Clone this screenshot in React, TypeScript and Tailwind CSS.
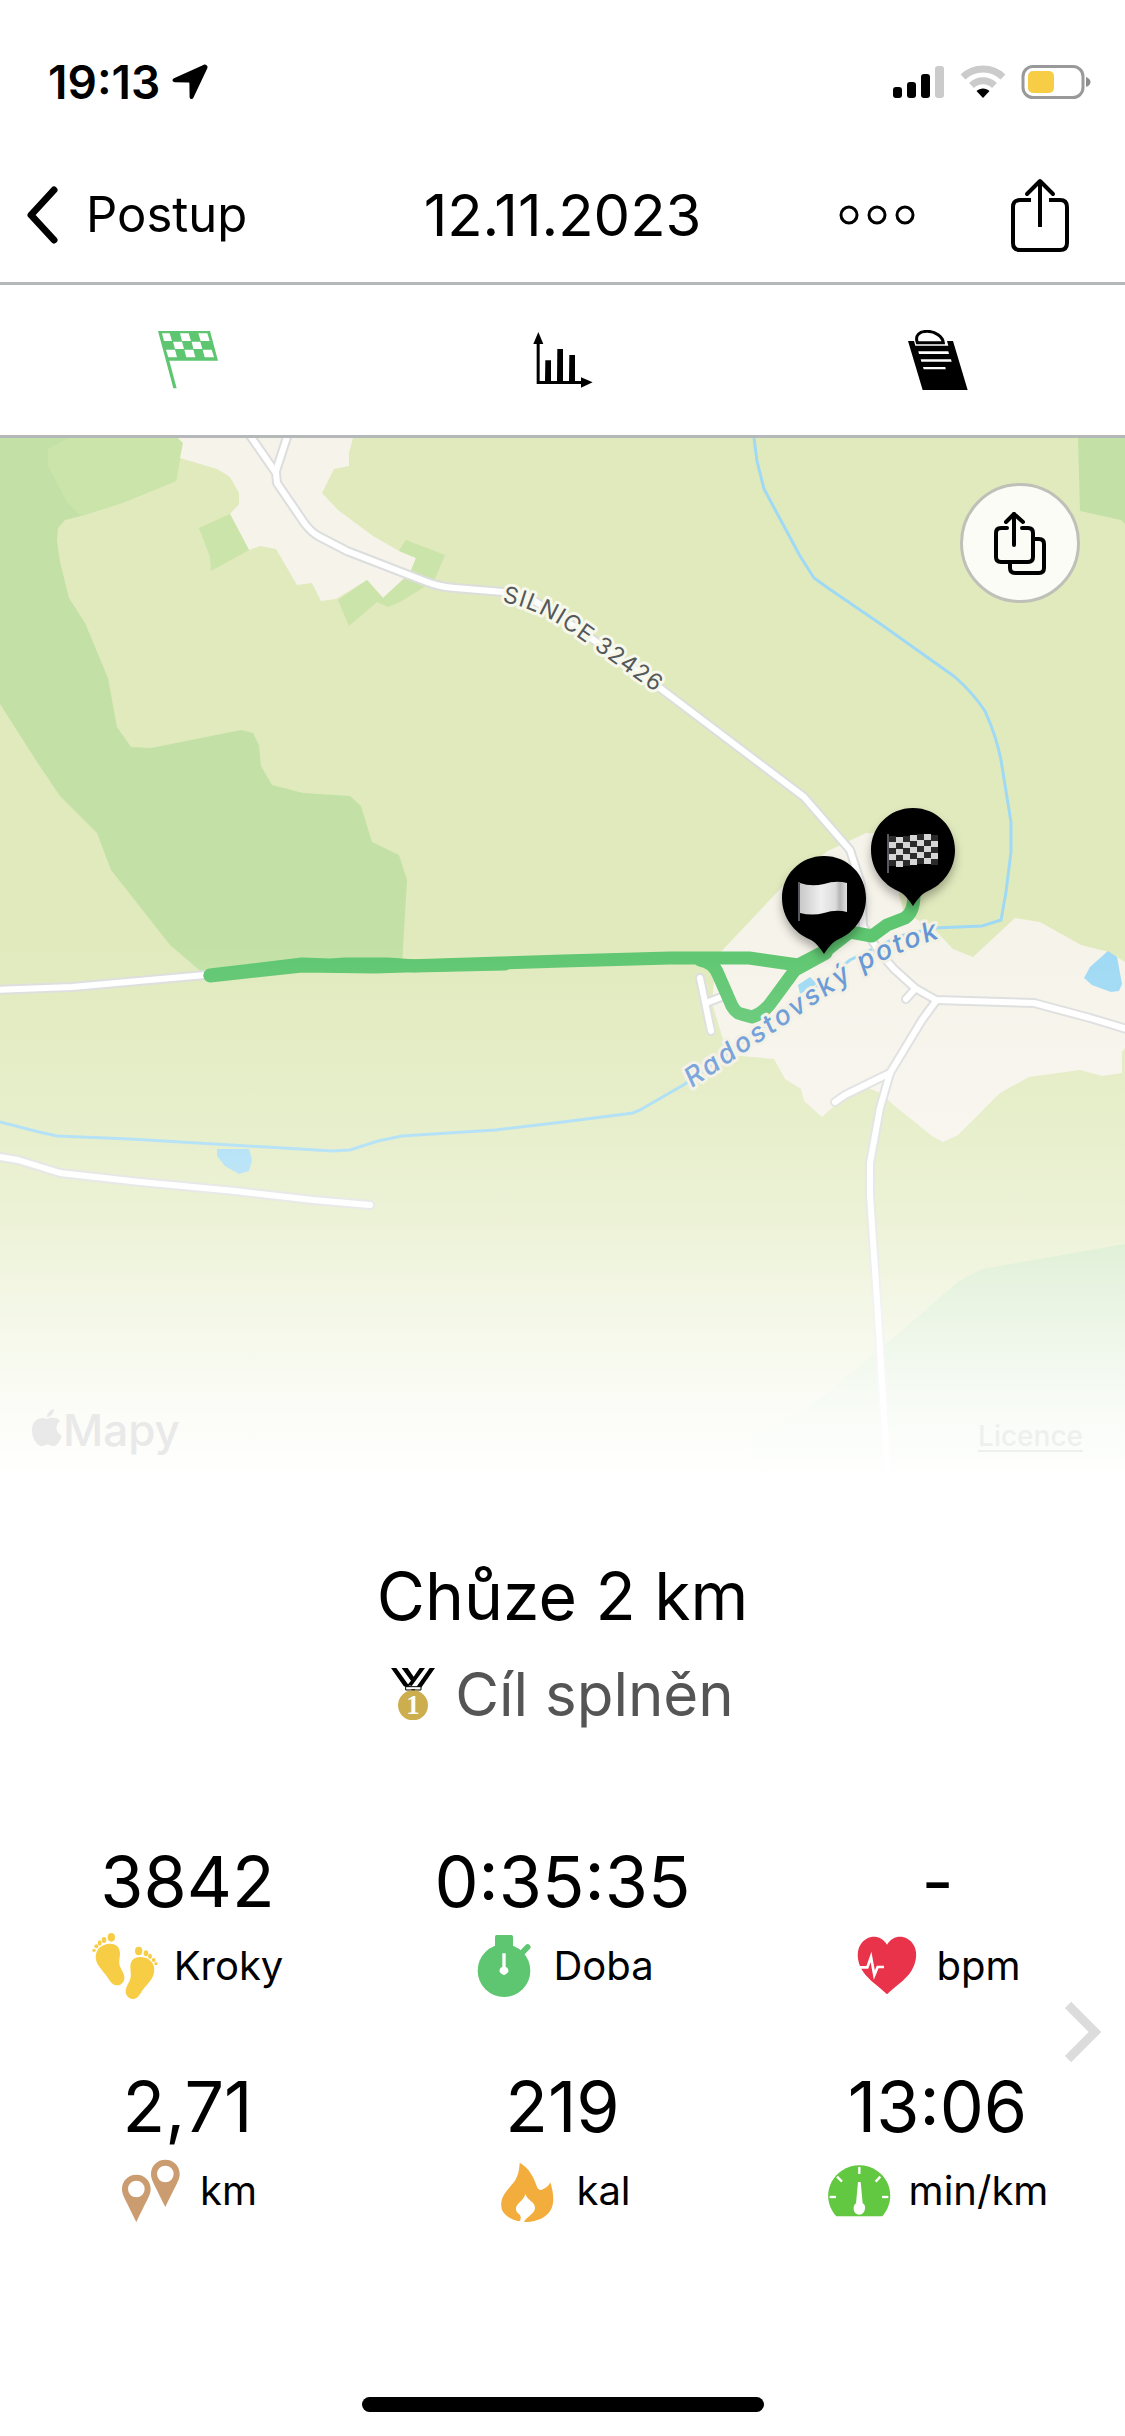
import { useState, type ReactNode } from "react";

type IconProps = { className?: string };

function LocationArrow() {
  return (
    <svg viewBox="0 0 36 36" className="w-9" aria-hidden="true">
      <path
        d="M34.5 1.2 C35.6 2 35.8 3 35.2 4.4 L21.5 33.6 C20.4 36 17.6 35.4 17.6 32.8 L17.4 19.4 C17.4 18.6 17 18.4 16.4 18.4 L3 18.3 C.2 18.2 -.4 15.4 2 14.3 L31.4 1 C32.6 .4 33.6 .5 34.5 1.2 Z"
        fill="#000"
      />
    </svg>
  );
}

function StatusIcons() {
  return (
    <svg viewBox="893 64 200 36" className="w-[200px]" role="img" aria-label="Signal, Wi-Fi, battery">
      <rect x="893" y="87" width="9" height="11" rx="3" />
      <rect x="907" y="82" width="9" height="16" rx="3" />
      <rect x="921" y="74" width="9" height="24" rx="3" />
      <rect x="935" y="66" width="9" height="32" rx="3" fill="#cbcbcb" />
      <path d="M963 77 A29 29 0 0 1 1003 77" fill="none" stroke="#cbcbcb" strokeWidth="7" />
      <path d="M971.500 85.500 A16.500 16.500 0 0 1 994.500 85.500" fill="none" stroke="#cbcbcb" strokeWidth="7" />
      <path d="M983 98 L976.500 91 C980 87.500 986 87.500 989.500 91 Z" />
      <rect x="1023" y="66.500" width="60" height="31" rx="10" fill="none" stroke="#999" strokeWidth="3" />
      <rect x="1028" y="71" width="26" height="22" rx="5" fill="#f7cd46" />
      <path d="M1086 77 C1092 79 1092 85 1086 87 Z" fill="#8c8c8c" />
    </svg>
  );
}

function ShareIcon() {
  return (
    <svg viewBox="0 0 58 74" className="w-[58px]" fill="none" stroke="#000" strokeWidth="4" aria-hidden="true">
      <path d="M20 22 H9 Q2 22 2 29 V65 Q2 72 9 72 H49 Q56 72 56 65 V29 Q56 22 49 22 H38" />
      <path d="M29 49 V4" />
      <path d="M16 16 L29 3 L42 16" strokeLinecap="round" strokeLinejoin="round" />
    </svg>
  );
}

function FlagTabIcon({ className }: IconProps) {
  // viewBox is three units per pixel
  return (
    <svg viewBox="0 0 180 174" className={className} fill="currentColor" aria-hidden="true">
      <path d="M0 0 H156 L180 89 H34 L56 172 H46 Z" />
      <g fill="#fff">
        <path d="M12 7 H35 L42 30 H18 Z" />
        <path d="M66 7 H92 L99 30 H72 Z" />
        <path d="M121 7 H148 L155 30 H128 Z" />
        <path d="M45 32 H72 L78 54 H51 Z" />
        <path d="M101 32 H127 L133 54 H106 Z" />
        <path d="M24 56 H51 L57 79 H31 Z" />
        <path d="M79 56 H106 L112 79 H85 Z" />
        <path d="M134 56 H161 L168 79 H140 Z" />
      </g>
    </svg>
  );
}

function ChartTabIcon({ className }: IconProps) {
  return (
    <svg viewBox="0 0 180 174" className={className} fill="currentColor" aria-hidden="true">
      <path d="M16 3 L31 39 H20 V150 H144 V139 L179 154 L144 170 V159 H11 V39 H1 Z" />
      <path d="M37 88 H54 V152 H36 Z" />
      <path d="M73 54 H90 V152 H72 Z" />
      <path d="M109 72 H126 V152 H108 Z" />
    </svg>
  );
}

function NotesTabIcon({ className }: IconProps) {
  return (
    <svg viewBox="0 0 180 180" className={className} fill="currentColor" aria-hidden="true">
      <path d="M0 33 H18 L22 47 H121 L117 33 H135 L179 180 H44 Z" />
      <path d="M28 38 C20 16 34 4 58 4 C82 4 104 20 106 38 Z" fill="#fff" stroke="currentColor" strokeWidth="9" />
      <path d="M31 64 H121 L123 72 H33 Z" fill="#fff" />
      <path d="M38 88 H129 L131 95 H40 Z" fill="#fff" />
      <path d="M45 111 H112 L113 118 H47 Z" fill="#fff" />
    </svg>
  );
}

function MedalIcon() {
  return (
    <svg viewBox="0 0 132 158" className="w-11" aria-hidden="true">
      <path d="M0 0 H16 L52 50 L62 58 L50 60 L38 54 Z" />
      <path d="M32 0 H50 L68 26 L86 0 H102 L62 54 L50 50 L60 38 Z" />
      <path d="M116 0 H132 L90 60 H74 Z" />
      <path d="M44 56 H90 V66 H44 Z" fill="#fff" stroke="#000" strokeWidth="3" />
      <path d="M61 64 H72 V72 H61 Z" />
      <circle cx="66" cy="112" r="45" fill="#ccae4e" />
      <text x="66" y="139" textAnchor="middle" className="font-['Liberation_Serif',serif] text-[80px] font-bold" fill="#fff">
        1
      </text>
    </svg>
  );
}

function StepsIcon() {
  return (
    <svg viewBox="0 0 198 198" className="w-[66px]" fill="#f8cd46" aria-hidden="true">
      <ellipse cx="58" cy="13" rx="11" ry="13" />
      <ellipse cx="36" cy="21" rx="7" ry="9" />
      <ellipse cx="23" cy="30" rx="6" ry="8" />
      <ellipse cx="13" cy="40" rx="6" ry="6" />
      <circle cx="6" cy="52" r="5" />
      <path d="M52 32 C72 31 83 42 84 60 C84 76 79 86 84 100 C88 112 96 119 97 132 C98 147 88 157 76 157 C64 157 58 150 50 138 C40 122 32 116 20 98 C2 72 12 35 52 32 Z" />
      <ellipse cx="140" cy="54" rx="11" ry="13" />
      <ellipse cx="162" cy="61" rx="7" ry="9" />
      <ellipse cx="174" cy="70" rx="6" ry="8" />
      <ellipse cx="185" cy="81" rx="6" ry="6" />
      <circle cx="192" cy="92" r="5" />
      <path d="M146 72 C126 71 116 82 115 100 C115 116 119 126 114 140 C110 152 102 160 101 172 C100 188 110 198 122 198 C134 198 140 190 147 179 C158 162 166 156 178 139 C198 110 184 73 146 72 Z" />
    </svg>
  );
}

function StopwatchIcon() {
  return (
    <svg viewBox="0 0 198 198" className="w-[66px]" fill="#5ec670" aria-hidden="true">
      <rect x="72" y="6" width="54" height="50" rx="5" />
      <path d="M145 68 L170 42" stroke="#5ec670" strokeWidth="17" strokeLinecap="round" />
      <circle cx="99" cy="113" r="79" />
      <path d="M94 61 H104 V101 C115 107 115 117 105 123 L99 127 L93 123 C83 117 83 107 94 101 Z" fill="#fff" />
    </svg>
  );
}

function HeartIcon() {
  return (
    <svg viewBox="0 0 198 198" className="w-[66px]" aria-hidden="true">
      <path
        d="M99 35 C84 10 58 6 38 17 C6 35 4 78 26 114 C44 142 78 163 99 184 C120 163 154 142 172 114 C194 78 192 35 160 17 C140 6 114 10 99 35 Z"
        fill="#e9334a"
      />
      <path d="M18 103 H40 L51 72 L61 126 L71 102 H90" fill="none" stroke="#fff" strokeWidth="8" />
    </svg>
  );
}

function DistanceIcon() {
  const pin = "M0 -43 C25 -43 43 -24 43 0 C43 18 33 30 0 99 C-33 30 -43 18 -43 0 C-43 -24 -25 -43 0 -43 Z M0 -25 A25 25 0 1 0 0 25 A25 25 0 1 0 0 -25 Z";
  return (
    <svg viewBox="0 0 198 198" className="w-[66px]" fill="#ca9c6f" fillRule="evenodd" aria-hidden="true">
      <path d={pin} transform="translate(55 93)" />
      <path d={pin} transform="translate(142 48)" />
    </svg>
  );
}

function FlameIcon() {
  return (
    <svg viewBox="0 0 198 198" className="w-[66px]" fill="#f2ad3d" aria-hidden="true">
      <path d="M77 14 C106 30 120 60 128 84 C133 98 140 97 147 94 C158 89 166 82 169 73 C176 96 182 124 174 148 C164 178 126 194 90 192 C94 178 123 168 123 149 C123 132 101 128 94 108 C90 128 66 136 66 152 C66 168 82 166 80 180 C80 186 78 190 74 190 C48 184 24 168 22 146 C18 112 44 94 60 72 C72 56 76 36 77 14 Z" />
    </svg>
  );
}

function GaugeIcon() {
  return (
    <svg viewBox="0 0 198 198" className="w-[66px]" fill="#62c741" aria-hidden="true">
      <path d="M28 175 C-14 128 2 66 44 38 C78 16 118 17 150 38 C192 66 206 128 166 175 Z" />
      <g stroke="#fff" strokeWidth="7">
        <path d="M97 27 V48" />
        <path d="M30 56 L45 71" />
        <path d="M160 56 L146 71" />
        <path d="M8 117 H27" />
        <path d="M165 117 H184" />
      </g>
      <path d="M93 72 H101 L107 136 C114 140 115 146 114 153 C112 164 105 170 97 170 C88 170 81 164 80 153 C79 146 82 140 87 136 Z" fill="#fff" />
    </svg>
  );
}

const roads = [
  "M249 434 L276 473 L277 483 L305 524 Q312 533 320 537 L347 551 L427 582 Q440 587 455 588 L503 592 L530 598 L584 633 L660 688 L804 797 L850 850 L861 884 L863 926 L880 953 L894 969 L915 988 L936 1000 L1034 1003 L1090 1018 L1130 1030",
  "M288 434 L276 471",
  "M915 989 L906 999",
  "M936 1001 L922 1020 L890 1073 L880 1108 L870 1163 V1195 L877 1300 L884 1416 L889 1490",
  "M890 1073 L845 1095 L835 1102",
  "M700 978 L711 1031",
  "M706 1003 L724 996",
  "M-6 990 L72 987 L205 975",
  "M-6 1156 L18 1160 L60 1173 L140 1182 L235 1191 L313 1200 L370 1205",
];

function MapPin({ x, y, children }: { x: number; y: number; children: ReactNode }) {
  return (
    <g transform={`translate(${x} ${y})`}>
      <path
        d="M0 -42 C24 -42 42 -23 42 0 C42 20 29 35 15 41 C8 44 4 50 0 56 C-4 50 -8 44 -15 41 C-29 35 -42 20 -42 0 C-42 -23 -24 -42 0 -42 Z"
        fill="#000"
        filter="url(#pin-shadow)"
      />
      {children}
      <path d="M-25 -16 V23" stroke="#55585c" strokeWidth="2" />
    </g>
  );
}

function RouteMap() {
  const cells = [];
  for (let row = 0; row < 5; row++) {
    for (let col = 0; col < 7; col++) {
      // each column is shifted along a shallow wave
      const dy = [1, 2, 1, 0, -1, -1, 0][col];
      cells.push(
        <rect
          key={`${row}-${col}`}
          x={-24 + col * 7}
          y={-15 + row * 6 + dy}
          width="7"
          height="6"
          fill={(row + col) % 2 ? "#d6d6d6" : "#2b2b2b"}
        />
      );
    }
  }

  return (
    <svg viewBox="0 438 1125 1052" className="block w-full" role="img" aria-label="Mapa trasy">
      <defs>
        <linearGradient id="fade" x1="0" y1="940" x2="0" y2="1480" gradientUnits="userSpaceOnUse">
          <stop offset="0" stopColor="#fff" stopOpacity="0" />
          <stop offset="0.340" stopColor="#fff" stopOpacity="0.220" />
          <stop offset="0.510" stopColor="#fff" stopOpacity="0.380" />
          <stop offset="0.670" stopColor="#fff" stopOpacity="0.610" />
          <stop offset="0.850" stopColor="#fff" stopOpacity="0.860" />
          <stop offset="1" stopColor="#fff" />
        </linearGradient>
        <linearGradient id="cloth" x1="0" x2="1">
          <stop offset="0" stopColor="#c9c9c9" />
          <stop offset="0.450" stopColor="#efefef" />
          <stop offset="0.750" stopColor="#dcdcdc" />
          <stop offset="0.850" stopColor="#b5b5b5" />
          <stop offset="1" stopColor="#e0e0e0" />
        </linearGradient>
        <filter id="pin-shadow" x="-30%" y="-30%" width="160%" height="170%">
          <feDropShadow dx="0" dy="6" stdDeviation="5" floodOpacity="0.300" />
        </filter>
        <path id="road-label" d="M502 602 Q535 608 566 629 L662 697" />
        <path id="river-label" d="M692 1088 L760 1042 L850 980 Q880 958 945 936" />
      </defs>

      <rect y="438" width="1125" height="1052" fill="#e1eabd" />

      {/* forests */}
      <path
        d="M0 438 H178 L180 458 L176 481 L122 503 L81 516 L65 520 L58 528 L57 541 L60 562 L69 598 L85 623 L108 678 L117 727 L131 747 L151 748 L241 730 L253 733 L259 745 L261 766 L272 785 L303 793 L350 796 L361 806 L372 842 L399 855 L407 880 L402 965 L205 975 L170 945 L111 870 L97 833 L60 796 L37 762 L0 704 Z"
        fill="#c3e1a6"
      />
      <path d="M68 438 H178 L183 443 L176 481 L122 503 L81 516 L68 504 L48 466 V449 Z" fill="#cae4aa" />
      <path d="M1078 438 H1125 V524 L1121 520 L1080 511 Z" fill="#c3e1a6" />
      <path d="M1125 1244 L1022 1262 L982 1269 L959 1281 L886 1344 L821 1398 L778 1425 L753 1441 L745 1490 H1125 Z" fill="#c8e4b8" />

      {/* built-up areas */}
      <path
        d="M178 438 L183 443 L180 458 L217 469 L230 477 L239 493 V504 L230 514 L249 550 L260 546 L276 549 L297 585 L312 583 L321 601 L336 599 L367 580 L383 598 L410 573 L416 558 L399 551 L373 536 L338 510 L322 493 L334 469 L349 466 V453 L353 438 Z"
        fill="#f6f3ea"
      />
      <path
        d="M783 886 L828 851 L866 833 L890 833 L900 870 L899 895 L904 912 L935 930 L953 949 L973 957 L1015 918 L1040 922 L1081 945 L1109 952 L1125 962 V1048 L1122 1052 V1073 L1102 1076 L1080 1070 L1029 1077 L1000 1093 L958 1135 L943 1142 L932 1136 L896 1107 L880 1093 L868 1088 L835 1105 L822 1117 L804 1101 L801 1089 L785 1079 L774 1059 L730 1055 L722 1036 L712 1003 L716 957 Z"
        fill="#f6f3ea"
      />
      <path d="M199 528 L230 514 L249 550 L211 571 L210 557 Z" fill="#cae4aa" />
      <path d="M406 540 L445 555 L434 581 L400 602 L388 607 L377 602 L349 626 L338 600 L367 580 L383 598 L410 573 L416 558 L399 551 Z" fill="#cae4aa" />

      {/* water */}
      <path
        d="M754 438 L757 461 L764 489 L800 556 L814 578 L828 588 L882 625 L955 677 Q973 693 985 711 Q996 735 1001 760 L1011 822 V852 L1006 892 L1001 920 L982 926 L934 928 L900 936 L850 960 L806 996 L685 1084 L640 1110 L633 1113 L563 1122 L495 1130 L402 1136 L378 1141 L350 1150 L332 1151 L300 1149 L130 1139 L57 1136 L39 1132 L0 1122"
        fill="none"
        stroke="#9fd9f4"
        strokeWidth="3"
      />
      <g fill="#9fd9f4">
        <path d="M217 1149 H249 L252 1160 L249 1171 L239 1174 L225 1166 L217 1156 Z" />
        <path d="M1108 951 L1117 957 L1122 984 L1119 991 L1111 992 L1092 985 L1084 978 L1090 967 Z" />
        <path d="M798 985 L810 977 L817 984 L800 994 Z" />
      </g>

      <g fill="none" strokeLinecap="round" strokeLinejoin="round">
        {roads.map((d) => (
          <path key={d} d={d} stroke="#dcdddd" strokeWidth="10" />
        ))}
        {roads.map((d) => (
          <path key={d} d={d} stroke="#fff" strokeWidth="6" />
        ))}
      </g>

      {/* walked route */}
      <g fill="none" stroke="#5ec670" strokeWidth="13" strokeLinecap="round" strokeLinejoin="round">
        <path d="M210 976 L302 966 L375 967 L500 963 L563 961 L670 958 H749 L798 965 L827 950 L850 932 L872 936 L887 925 L905 918 Q914 912 914 895" />
        <path d="M210 975 L302 964 L330 965 L345 964 H388 L415 966 L505 964" />
        <path d="M700 960 Q713 962 718 974 L732 1006 Q736 1013 741 1014 L752 1017 Q762 1014 770 1004 L795 970 L826 953" />
      </g>

      <g paintOrder="stroke" strokeLinejoin="round">
        <text className="font-['Inter',sans-serif] text-[23px]" fill="#55585a" stroke="#f7f8ec" strokeWidth="6">
          <textPath href="#road-label" className="tracking-wider">
            SILNICE 32426
          </textPath>
        </text>
        <text className="font-['Inter',sans-serif] text-[27px] font-medium italic" fill="#6496d4" stroke="#f3f0e4" strokeWidth="6">
          <textPath href="#river-label" className="tracking-widest">
            Radostovský potok
          </textPath>
        </text>
      </g>

      <MapPin x={913} y={850}>
        {cells}
      </MapPin>
      <MapPin x={824} y={898}>
        <path d="M-24 -15 Q-13 -11 0 -14 Q12 -18 23 -15 V14 Q12 11 0 15 Q-12 18 -24 15 Z" fill="url(#cloth)" />
      </MapPin>

      <rect y="900" width="1125" height="590" fill="url(#fade)" />
    </svg>
  );
}

const stats = [
  { value: "3842", label: "Kroky", icon: <StepsIcon /> },
  { value: "0:35:35", label: "Doba", icon: <StopwatchIcon /> },
  { value: "-", label: "bpm", icon: <HeartIcon /> },
  { value: "2,71", label: "km", icon: <DistanceIcon /> },
  { value: "219", label: "kal", icon: <FlameIcon /> },
  { value: "13:06", label: "min/km", icon: <GaugeIcon /> },
];

const tabs = [
  { id: "route", label: "Trasa", Icon: FlagTabIcon },
  { id: "charts", label: "Grafy", Icon: ChartTabIcon },
  { id: "notes", label: "Poznámky", Icon: NotesTabIcon },
];

export default function App() {
  const [tab, setTab] = useState("route");

  return (
    <div className="flex min-h-screen flex-col bg-white font-['Inter','Liberation_Sans',sans-serif] text-black">
      <div className="flex h-[148px] items-center justify-between pt-4 pr-8 pl-12">
        <div className="flex items-center gap-3">
          <span className="text-[46px] leading-[56px] font-semibold">19:13</span>
          <LocationArrow />
        </div>
        <StatusIcons />
      </div>

      <header className="grid h-[137px] grid-cols-[1fr_auto_1fr] items-center border-b-3 border-[#b5b8b9] px-6">
        <button type="button" className="flex items-center gap-7 justify-self-start text-[49px] leading-[60px]">
          <svg viewBox="0 0 34 58" className="w-[34px]" fill="none" aria-hidden="true">
            <path d="M30 4 L7 29 L30 54" stroke="#000" strokeWidth="7" strokeLinecap="round" strokeLinejoin="round" />
          </svg>
          Postup
        </button>
        <h1 className="text-[58px] leading-[72px]">12.11.2023</h1>
        <div className="mr-8 flex items-center gap-24 justify-self-end">
          <button type="button" aria-label="Další možnosti">
            <svg viewBox="0 0 76 20" className="w-[76px]" fill="none" stroke="#000" strokeWidth="3" aria-hidden="true">
              <circle cx="10" cy="10" r="8" />
              <circle cx="38" cy="10" r="8" />
              <circle cx="66" cy="10" r="8" />
            </svg>
          </button>
          <button type="button" aria-label="Sdílet">
            <ShareIcon />
          </button>
        </div>
      </header>

      <nav className="grid h-[153px] grid-cols-3 border-b-3 border-[#b5b8b9]">
        {tabs.map(({ id, label, Icon }) => (
          <button
            key={id}
            type="button"
            aria-label={label}
            onClick={() => setTab(id)}
            className={`flex items-center justify-center ${tab === id ? "text-[#5ec670]" : "text-black"}`}
          >
            <Icon className="w-[60px]" />
          </button>
        ))}
      </nav>

      <div className="relative">
        <RouteMap />
        <button
          type="button"
          aria-label="Sdílet mapu"
          className="absolute top-[45px] right-[45px] flex size-[120px] items-center justify-center rounded-full border-3 border-[#bfc0b8] bg-white/85"
        >
          <svg viewBox="0 0 54 64" className="w-[54px]" fill="none" stroke="#000" strokeWidth="4" strokeLinecap="round" strokeLinejoin="round" aria-hidden="true">
            <path d="M14 17 H8 Q3 17 3 22 V46 Q3 51 8 51 H35 Q40 51 40 46 V22 Q40 17 35 17 H29" />
            <path d="M21 34 V3" />
            <path d="M13 11 L21 3 L30 11" />
            <path d="M40 28 H46 Q51 28 51 33 V57 Q51 62 46 62 H22 Q17 62 17 57 V51" />
          </svg>
        </button>
        <div className="absolute bottom-[34px] left-8 flex items-center gap-px text-[#e9e9e9]">
          <svg viewBox="0 0 30 38" className="mb-1 w-[30px]" fill="currentColor" aria-hidden="true">
            <path d="M15 10 C19 8 25 8 28 12 C23 16 23 23 30 27 C27 34 24 38 20 37 C17 35 14 35 11 37 C5 38 0 29 0 21 C0 11 8 7 15 10 Z" />
            <path d="M15 8 C15 4 18 1 22 0 C22 4 19 8 15 8 Z" />
          </svg>
          <span className="text-[44px] leading-[52px] font-medium">Mapy</span>
        </div>
        <a href="#licence" className="absolute right-[42px] bottom-[38px] text-[28px] leading-8 font-medium text-[#eef0ed] underline underline-offset-4">
          Licence
        </a>
      </div>

      <main className="flex flex-col items-center pt-16">
        <h2 className="text-[66px] leading-[84px]">Chůze 2 km</h2>
        <p className="mt-5 flex items-center gap-5 text-[60px] leading-[72px] text-[#555]">
          <MedalIcon />
          Cíl splněn
        </p>

        <div className="relative mt-[110px] w-full">
          <dl className="grid grid-cols-3 gap-y-[66px]">
            {stats.map((s) => (
              <div key={s.label} className="flex flex-col-reverse items-center gap-[9px]">
                <dt className="flex h-[66px] items-center gap-4 text-[40px] leading-[48px]">
                  {s.icon}
                  {s.label}
                </dt>
                <dd className="text-[70px] leading-[84px]">{s.value}</dd>
              </div>
            ))}
          </dl>
          <button type="button" aria-label="Další" className="absolute top-1/2 right-6 -translate-y-1/2">
            <svg viewBox="0 0 36 62" className="w-9" fill="none" stroke="#dcdcdc" strokeWidth="9" aria-hidden="true">
              <path d="M3 4 L30 31 L3 58" />
            </svg>
          </button>
        </div>
      </main>

      <div className="mx-auto mt-auto mb-6 h-[15px] w-[402px] rounded-full bg-black" />
    </div>
  );
}
